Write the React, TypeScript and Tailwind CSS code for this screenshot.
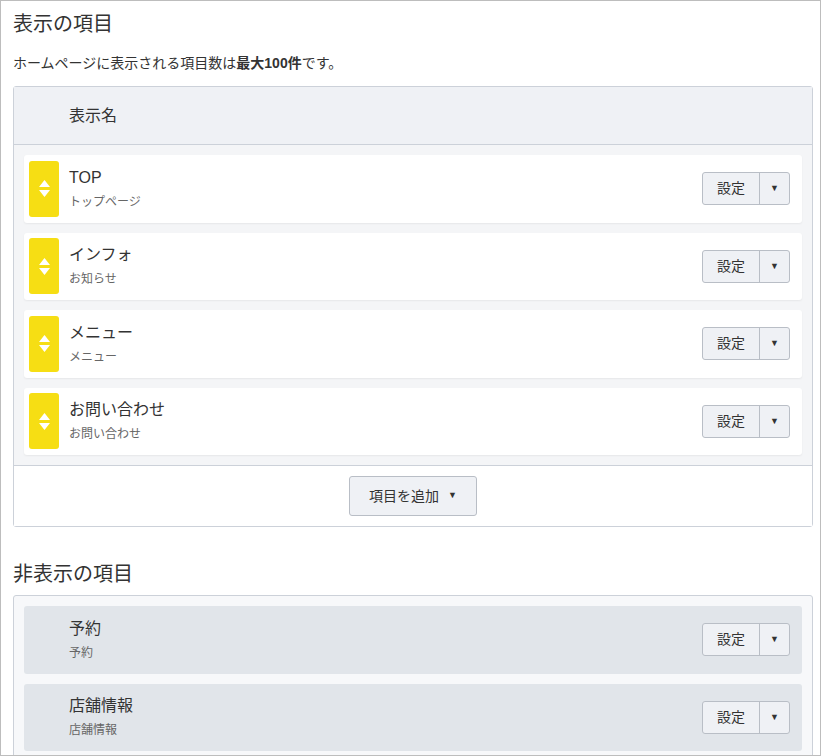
import React from "react";

const font = { fontFamily: '"Liberation Sans", "Noto Sans CJK JP", sans-serif' };

function Handle() {
  return (
    <div className="w-[30px] h-[56px] shrink-0 rounded-[3px] bg-[#f6de14] flex flex-col items-center justify-center gap-[3px]">
      <svg width="11" height="7" viewBox="0 0 11 7"><polygon points="5.5,0 11,7 0,7" fill="#fff" /></svg>
      <svg width="11" height="7" viewBox="0 0 11 7"><polygon points="0,0 11,0 5.5,7" fill="#fff" /></svg>
    </div>
  );
}

function SplitButton() {
  return (
    <div className="flex h-[33px] rounded-[3px] border border-[#b9bec6] bg-[#eff1f5] text-[14px] text-[#333]">
      <div className="w-[57px] flex items-center justify-center border-r border-[#b9bec6]">設定</div>
      <div className="w-[29px] flex items-center justify-center text-[9px]">▼</div>
    </div>
  );
}

function Item({ title, sub, hidden }: { title: string; sub: string; hidden?: boolean }) {
  return (
    <div
      className={
        "h-[67.5px] rounded-[3px] flex items-center pl-[5px] pr-[12px] " +
        (hidden ? "bg-[#e1e5ea]" : "bg-white shadow-[0_1px_2px_rgba(0,0,0,0.06)]")
      }
    >
      {hidden ? <div className="w-[30px] shrink-0" /> : <Handle />}
      <div className="ml-[10px] flex-1 flex flex-col">
        <div className="text-[16px] leading-[20px] text-[#333]">{title}</div>
        <div className="mt-[6px] text-[12px] leading-[16px] text-[#666]">{sub}</div>
      </div>
      <SplitButton />
    </div>
  );
}

export default function App() {
  return (
    <div className="w-[821px] h-[756px] overflow-hidden border border-[#bdbdbd] bg-white pl-[12px] pr-[7px]" style={font}>
      <h1 className="mt-[10px] text-[20px] leading-[26px] text-[#333]">表示の項目</h1>
      <p className="mt-[16px] text-[14px] leading-[20px] text-[#333]">
        ホームページに表示される項目数は<b>最大100件</b>です。
      </p>
      <div className="mt-[13px] rounded-[3px] border border-[#ccd1d9]">
        <div className="h-[58px] bg-[#eff1f5] border-b border-[#ccd1d9] flex items-center pl-[55px] text-[16px] text-[#333]">
          表示名
        </div>
        <div className="bg-[#f4f5f7] px-[10px] pt-[10px] pb-[10px] flex flex-col gap-[10px]">
          <Item title="TOP" sub="トップページ" />
          <Item title="インフォ" sub="お知らせ" />
          <Item title="メニュー" sub="メニュー" />
          <Item title="お問い合わせ" sub="お問い合わせ" />
        </div>
        <div className="border-t border-[#ccd1d9] bg-white pt-[10px] pb-[10px] flex justify-center">
          <div className="w-[128px] h-[40px] rounded-[3px] border border-[#b9bec6] bg-[#eff1f5] flex items-center justify-center gap-[9px] text-[14px] text-[#333]">
            <span>項目を追加</span>
            <span className="text-[9px]">▼</span>
          </div>
        </div>
      </div>
      <h2 className="mt-[34px] text-[20px] leading-[26px] text-[#333]">非表示の項目</h2>
      <div className="mt-[8px] rounded-[3px] border border-[#ccd1d9] bg-[#f7f8fa] px-[10px] pt-[10px] pb-[10px] flex flex-col gap-[10px]">
        <Item title="予約" sub="予約" hidden />
        <Item title="店舗情報" sub="店舗情報" hidden />
      </div>
    </div>
  );
}
